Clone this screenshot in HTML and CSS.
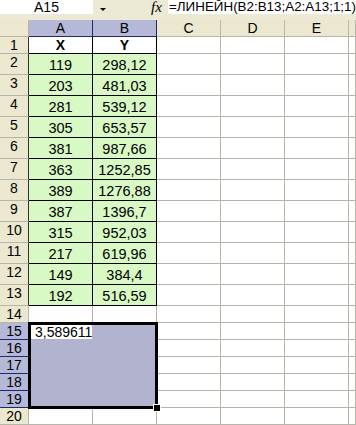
FILE: index.html
```html
<!DOCTYPE html>
<html lang="ru">
<head>
  <meta charset="UTF-8" />
  <title>ЛИНЕЙН</title>
  <link rel="stylesheet" href="styles.css">
</head>
<body>

  <div class="bar">
    <div class="namebox">A15</div>
    <div class="drop"><span class="arrow"></span></div>
    <div class="fx">fx</div>
    <div class="formula">=ЛИНЕЙН(B2:B13;A2:A13;1;1)</div>
  </div>

  <div class="sheet" id="sheet">
    <div class="sel">
      <div class="active">3,589611</div>
      <span class="handle"></span>
    </div>
  </div>

  <script>
    const sheet = document.getElementById('sheet');
    const xs = ['119', '203', '281', '305', '381', '363', '389', '387', '315', '217', '149', '192'];
    const ys = ['298,12', '481,03', '539,12', '653,57', '987,66', '1252,85', '1276,88', '1396,7', '952,03', '619,96', '384,4', '516,59'];
    const cols = ['A', 'B', 'C', 'D', 'E', 'F'];

    function cell(cls, text) {
      const d = document.createElement('div');
      d.className = cls;
      if (text) d.textContent = text;
      sheet.appendChild(d);
    }

    // шапка столбцов
    cell('corner');
    cols.forEach((c, i) => cell(i < 2 ? 'hd on' : 'hd', c === 'F' ? '' : c));

    for (let r = 1; r <= 20; r++) {
      const inSel = r >= 15 && r <= 19;
      let rh = 'rh';
      if (inSel) rh += ' on';
      else if (r <= 13) rh += ' dark';
      cell(rh, String(r));

      cols.forEach((c, i) => {
        if (inSel && i < 2) return; // место под выделение
        if (r === 1 && i < 2) return cell('c t head', i === 0 ? 'X' : 'Y');
        if (r <= 13 && i < 2) return cell('c t green', i === 0 ? xs[r - 2] : ys[r - 2]);
        cell('c');
      });
    }
  </script>

</body>
</html>
```

FILE: styles.css
```css
body {
  margin: 0;
  width: 356px;
  height: 425px;
  overflow: hidden;
  font-family: "Liberation Sans", Arial, sans-serif;
  font-size: 14px;
  color: #000;
  background: #fff;
}
.bar {
  display: flex;
  height: 20px;
  background: #ece9d4;
}
.namebox {
  width: 93px;
  height: 14px;
  line-height: 14px;
  background: #fff;
  text-align: center;
}
.drop {
  width: 27px;
  display: flex;
  align-items: center;
  padding-left: 7px;
  box-sizing: border-box;
  height: 20px;
  padding-bottom: 2px;
}
.arrow {
  width: 0;
  height: 0;
  border-left: 3px solid transparent;
  border-right: 3px solid transparent;
  border-top: 3px solid #000;
}
.fx {
  margin-left: 31px;
  width: 17px;
  font-family: "Liberation Serif", serif;
  font-style: italic;
  font-size: 15px;
  line-height: 14px;
}
.formula {
  flex: 1;
  height: 14px;
  line-height: 14px;
  padding-left: 1px;
  font-size: 13.4px;
  background: #fff;
  white-space: nowrap;
  overflow: hidden;
}
.sheet {
  display: grid;
  grid-template-columns: 29px repeat(5, 64px) 1fr;
  grid-template-rows: 17px 17px repeat(12, 21px) repeat(7, 17px);
}
.sheet > div {
  box-sizing: border-box;
  border-right: 1px solid #b7b4a9;
  border-bottom: 1px solid #b7b4a9;
  text-align: center;
  line-height: 16px;
}
.corner, .hd, .rh {
  background: #ebe8cf;
}
.hd.on, .rh.on {
  background: #b5b8d6;
  border-color: #1c2b6e !important;
}
.rh.dark {
  border-right-color: #333 !important;
}
.c.t {
  border-color: #000;
}
.c.green {
  background: #d8f8c4;
  font-size: 14.5px;
  line-height: 20px;
  padding-top: 1px;
}
.c.head {
  font-weight: bold;
}
.sel {
  grid-column: 2 / 4;
  grid-row: 16 / 21;
  margin: -1px;
  position: relative;
  z-index: 1;
  border: 3px solid #000 !important;
  background: #b2b3cf;
  text-align: left !important;
}
.active {
  width: 61px;
  height: 14px;
  line-height: 14px;
  background: #fff;
  padding-left: 4px;
  box-sizing: border-box;
}
.handle {
  position: absolute;
  right: -6px;
  bottom: -6px;
  width: 6px;
  height: 6px;
  background: #000;
  border: 1px solid #fff;
}
```
